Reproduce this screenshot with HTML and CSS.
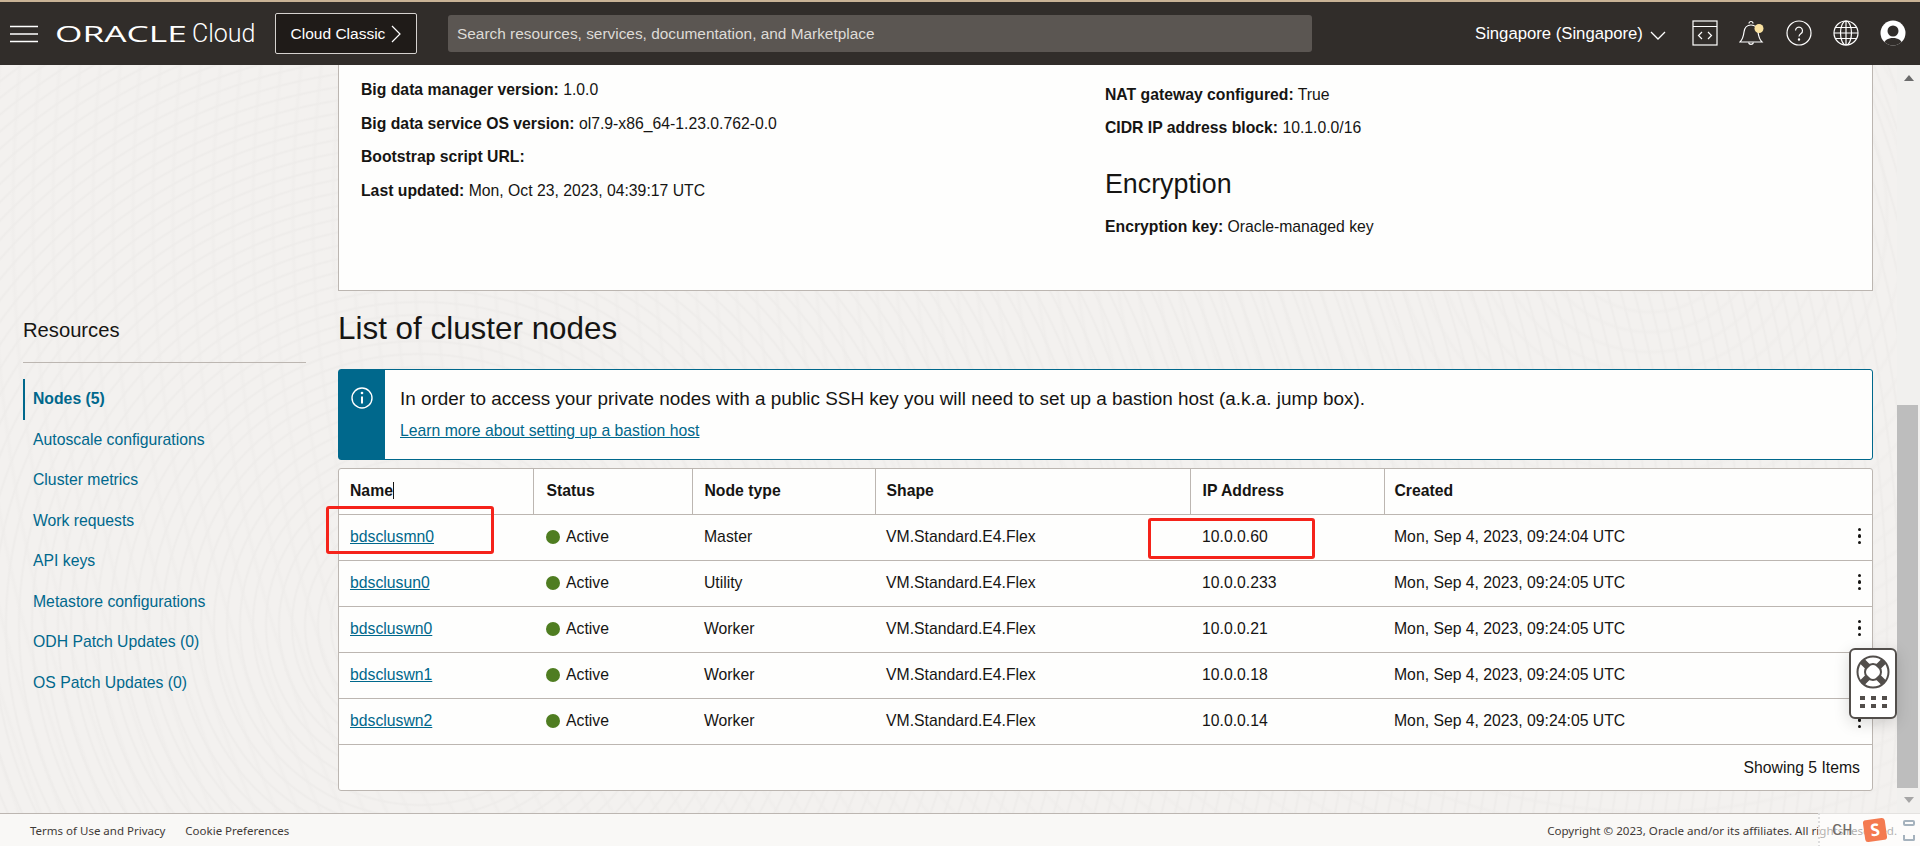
FILE: index.html
```html
<!DOCTYPE html>
<html lang="en">
<head>
    <meta charset="UTF-8">
    <meta name="viewport" content="width=device-width, initial-scale=1.0">
    <title>Big Data Service - Cluster details</title>
    <link rel="stylesheet" href="styles.css">
</head>
<body>
    <header class="topbar">
        <svg class="menu-icon" width="28" height="18" viewBox="0 0 28 18"><path d="M0 1.5h28M0 9h28M0 16.5h28" stroke="#fff" stroke-width="1.6"/></svg>
        <span class="logo-box"><span class="logo">ORACLE</span></span>
        <span class="logo-cloud">Cloud</span>
        <button class="classic-btn">Cloud Classic
            <svg width="10" height="18" viewBox="0 0 10 18"><path d="M1 1l8 8-8 8" fill="none" stroke="#fff" stroke-width="1.2"/></svg>
        </button>
        <div class="search">Search resources, services, documentation, and Marketplace</div>
        <div class="region">Singapore (Singapore)
            <svg width="16" height="9" viewBox="0 0 16 9"><path d="M1 1l7 7 7-7" fill="none" stroke="#fff" stroke-width="1.3"/></svg>
        </div>
        <div class="top-icons">
            <svg width="26" height="26" viewBox="0 0 26 26" fill="none" stroke="#fff" stroke-width="1.2"><rect x="1" y="1" width="24" height="24"/><path d="M1 6.500h24M10 12l-3.500 3.500 3.500 3.500M16 12l3.500 3.500-3.500 3.500"/></svg>
            <svg width="26" height="27" viewBox="0 0 26 27" fill="none" stroke="#fff" stroke-width="1.2"><path d="M1 22c3-3 3.500-6 4-10s3-7 7-7 6.500 3 7 7 1 7 4 10z"/><path d="M10 3.500a2 2 0 0 1 4 0M9.500 22.500a2.600 2.600 0 0 0 5 0"/><circle cx="20" cy="8.500" r="4.500" fill="#f9e1a0" stroke="none"/></svg>
            <svg width="26" height="26" viewBox="0 0 26 26" fill="none" stroke="#fff" stroke-width="1.2"><circle cx="13" cy="13" r="12"/><path d="M9.500 10.500a3.500 3.500 0 1 1 5.500 3c-1.300.9-2 1.500-2 3"/><circle cx="13" cy="19.500" r=".6" fill="#fff"/></svg>
            <svg width="26" height="26" viewBox="0 0 26 26" fill="none" stroke="#fff" stroke-width="1.2"><circle cx="13" cy="13" r="12"/><ellipse cx="13" cy="13" rx="5.500" ry="12"/><path d="M13 1v24M1 13h24M2.500 7.500h21M2.500 18.500h21"/></svg>
            <svg width="26" height="26" viewBox="0 0 26 26"><defs><clipPath id="avatar-clip"><circle cx="13" cy="13" r="12.500"/></clipPath></defs><circle cx="13" cy="13" r="12.500" fill="#fff"/><g clip-path="url(#avatar-clip)"><circle cx="13" cy="11" r="5.500" fill="#312d2a"/><path d="M3 26c1-6 5-8 10-8s9 2 10 8z" fill="#312d2a"/></g></svg>
        </div>
    </header>

    <div class="middle">
        <aside class="sidebar">
            <h2 class="side-title">Resources</h2>
            <nav class="side-nav">
                <a class="active">Nodes (5)</a>
                <a>Autoscale configurations</a>
                <a>Cluster metrics</a>
                <a>Work requests</a>
                <a>API keys</a>
                <a>Metastore configurations</a>
                <a>ODH Patch Updates (0)</a>
                <a>OS Patch Updates (0)</a>
            </nav>
        </aside>

        <main class="content">
            <section class="details">
                <div class="details-col">
                    <p><b>Big data manager version:</b> 1.0.0</p>
                    <p><b>Big data service OS version:</b> ol7.9-x86_64-1.23.0.762-0.0</p>
                    <p><b>Bootstrap script URL:</b></p>
                    <p><b>Last updated:</b> Mon, Oct 23, 2023, 04:39:17 UTC</p>
                </div>
                <div class="details-col right">
                    <p><b>NAT gateway configured:</b> True</p>
                    <p><b>CIDR IP address block:</b> 10.1.0.0/16</p>
                    <h3>Encryption</h3>
                    <p><b>Encryption key:</b> Oracle-managed key</p>
                </div>
            </section>

            <h1 class="list-title">List of cluster nodes</h1>

            <div class="info-box">
                <div class="info-side">
                    <svg width="22" height="22" viewBox="0 0 22 22" fill="none" stroke="#fff" stroke-width="1.4"><circle cx="11" cy="11" r="10"/><path d="M11 9.500v7" stroke-width="2"/><circle cx="11" cy="6" r="1.300" fill="#fff" stroke="none"/></svg>
                </div>
                <div class="info-text">
                    <p>In order to access your private nodes with a public SSH key you will need to set up a bastion host (a.k.a. jump box).</p>
                    <a>Learn more about setting up a bastion host</a>
                </div>
            </div>

            <div class="table-card">
                <table class="nodes">
                    <colgroup>
                        <col class="c-name"><col class="c-status"><col class="c-type"><col class="c-shape"><col class="c-ip"><col>
                    </colgroup>
                    <thead>
                        <tr><th>Name<span class="caret"></span></th><th>Status</th><th>Node type</th><th>Shape</th><th>IP Address</th><th>Created</th></tr>
                    </thead>
                    <tbody>
                        <tr><td><a>bdsclusmn0</a></td><td><i class="dot"></i>Active</td><td>Master</td><td>VM.Standard.E4.Flex</td><td>10.0.0.60</td><td>Mon, Sep 4, 2023, 09:24:04 UTC<span class="kebab"><i></i><i></i><i></i></span></td></tr>
                        <tr><td><a>bdsclusun0</a></td><td><i class="dot"></i>Active</td><td>Utility</td><td>VM.Standard.E4.Flex</td><td>10.0.0.233</td><td>Mon, Sep 4, 2023, 09:24:05 UTC<span class="kebab"><i></i><i></i><i></i></span></td></tr>
                        <tr><td><a>bdscluswn0</a></td><td><i class="dot"></i>Active</td><td>Worker</td><td>VM.Standard.E4.Flex</td><td>10.0.0.21</td><td>Mon, Sep 4, 2023, 09:24:05 UTC<span class="kebab"><i></i><i></i><i></i></span></td></tr>
                        <tr><td><a>bdscluswn1</a></td><td><i class="dot"></i>Active</td><td>Worker</td><td>VM.Standard.E4.Flex</td><td>10.0.0.18</td><td>Mon, Sep 4, 2023, 09:24:05 UTC<span class="kebab"><i></i><i></i><i></i></span></td></tr>
                        <tr><td><a>bdscluswn2</a></td><td><i class="dot"></i>Active</td><td>Worker</td><td>VM.Standard.E4.Flex</td><td>10.0.0.14</td><td>Mon, Sep 4, 2023, 09:24:05 UTC<span class="kebab"><i></i><i></i><i></i></span></td></tr>
                    </tbody>
                </table>
                <div class="table-foot">Showing 5 Items</div>
            </div>
        </main>

        <div class="scrollbar">
            <span class="arrow up"></span>
            <span class="thumb"></span>
            <span class="arrow down"></span>
        </div>

        <!-- red boxes drawn over the screenshot -->
        <span class="mark mark-name"></span>
        <span class="mark mark-ip"></span>

        <div class="help-widget">
            <svg width="34" height="34" viewBox="0 0 34 34" fill="none"><circle cx="17" cy="17" r="15.500" stroke="#524e4b" stroke-width="2"/><circle cx="17" cy="17" r="8" stroke="#524e4b" stroke-width="2"/><path d="M6 6l6.500 6.500M28 6l-6.500 6.500M6 28l6.500-6.500M28 28l-6.500-6.500" stroke="#524e4b" stroke-width="6.500"/></svg>
            <div class="help-dots"><i></i><i></i><i></i><i></i><i></i><i></i></div>
        </div>
    </div>

    <footer class="footer">
        <a>Terms of Use and Privacy</a>
        <a>Cookie Preferences</a>
        <span class="copyright">Copyright © 2023, Oracle and/or its affiliates. All rights reserved.</span>
        <div class="ime">
            <span class="ime-ch">CH</span>
            <span class="ime-s">S</span>
            <span class="ime-more"><i></i><i></i></span>
        </div>
    </footer>
</body>
</html>
```

FILE: styles.css
```css
* {
    margin: 0;
    padding: 0;
    box-sizing: border-box;
}
body {
    font-family: "Liberation Sans", Arial, sans-serif;
    font-size: 15.750px;
    color: #161513;
    width: 100vw;
    height: 100vh;
    overflow: hidden;
    display: flex;
    flex-direction: column;
    background: #f3f1ef;
}
a {
    color: #00688c;
}

/* top bar */
.topbar {
    height: 65px;
    flex: none;
    display: flex;
    align-items: center;
    background: #312d2a;
    border-top: 2px solid #c9b396;
    color: #fff;
    padding-left: 10px;
}
.menu-icon {
    flex: none;
    margin-right: 17px;
}
.logo-box {
    width: 130px;
    flex: none;
}
.logo {
    display: inline-block;
    font-family: "Open Sans", sans-serif;
    font-size: 21px;
    transform: scaleX(1.680);
    transform-origin: left center;
}
.logo-cloud {
    font-family: Roboto, sans-serif;
    font-weight: 300;
    font-size: 25px;
    margin-left: 7px;
    width: 63px;
}
.classic-btn {
    width: 142px;
    height: 41px;
    margin-left: 20px;
    background: #1f1b18;
    color: #fff;
    border: 1px solid #d5d2cf;
    border-radius: 2px;
    font-family: inherit;
    font-size: 15.500px;
    display: flex;
    align-items: center;
    justify-content: center;
    gap: 6px;
}
.search {
    width: 864px;
    height: 37px;
    margin-left: 31px;
    padding-left: 9px;
    line-height: 37px;
    background: #5b5652;
    border-radius: 3px;
    color: #dedbd7;
    font-size: 15.400px;
}
.region {
    margin-left: 163px;
    width: 191px;
    font-size: 16.700px;
    display: flex;
    align-items: center;
    gap: 7px;
}
.region svg {
    margin-top: 4px;
}
.top-icons {
    margin-left: 26px;
    display: flex;
    gap: 21px;
}

/* middle */
.middle {
    flex: 1;
    min-height: 0;
    position: relative;
    display: flex;
    padding-left: 23px;
    background-color: #f3f1ef;
    background-image:
        repeating-radial-gradient(circle at 420px 560px, transparent 0 9px, #eeecea 11px, transparent 13px),
        repeating-radial-gradient(circle at 1650px 150px, transparent 0 14px, #f0eeec 17px, transparent 20px);
}
.sidebar {
    width: 283px;
    flex: none;
    padding-top: 253px;
}
.side-title {
    font-size: 20.200px;
    font-weight: 400;
    line-height: 24px;
    padding-bottom: 20px;
    border-bottom: 1px solid #bcb6b1;
}
.side-nav {
    display: flex;
    flex-direction: column;
    margin-top: 16px;
}
.side-nav a {
    height: 40.500px;
    line-height: 40.500px;
    padding-left: 10px;
}
.side-nav .active {
    font-weight: 700;
    border-left: 2px solid #00688c;
    padding-left: 8px;
}
.content {
    width: 1535px;
    margin-left: 32px;
    flex: none;
}
.details {
    height: 226px;
    background: #fefefd;
    border: 1px solid #bcb6b1;
    border-top: 0;
    display: flex;
    padding-left: 22px;
}
.details-col {
    width: 744px;
    padding-top: 8px;
}
.details-col p {
    line-height: 33.500px;
}
.details-col.right {
    padding-top: 13px;
}
.details-col.right p {
    line-height: 33px;
}
.details-col h3 {
    font-size: 26.800px;
    font-weight: 400;
    line-height: 34px;
    margin: 23px 0 9px;
}
.list-title {
    font-size: 31.400px;
    font-weight: 400;
    line-height: 36px;
    margin-top: 20px;
    margin-bottom: 22px;
}
.info-box {
    height: 91px;
    display: flex;
    background: #fefefd;
    border: 1px solid #00688c;
    border-radius: 3px;
}
.info-side {
    width: 46px;
    background: #00688c;
    display: flex;
    justify-content: center;
    padding-top: 17px;
}
.info-text {
    padding-left: 15px;
    padding-top: 17px;
}
.info-text p {
    font-size: 18.900px;
    line-height: 24px;
    margin-bottom: 11px;
}
.info-text a {
    text-decoration: underline;
}
.table-card {
    margin-top: 8px;
    height: 323px;
    background: #fefefd;
    border: 1px solid #bcb6b1;
    border-radius: 3px;
}
.nodes {
    width: 100%;
    table-layout: fixed;
    border-collapse: collapse;
}
.c-name { width: 194px; }
.c-status { width: 159px; }
.c-type { width: 183px; }
.c-shape { width: 315px; }
.c-ip { width: 194px; }
.nodes th, .nodes td {
    height: 46px;
    padding: 0 0 0 11px;
    text-align: left;
    border-bottom: 1px solid #bcb6b1;
    white-space: nowrap;
}
.nodes th {
    height: 45px;
    font-weight: 700;
    border-right: 1px solid #bcb6b1;
}
.nodes th:last-child {
    border-right: 0;
}
.nodes th:nth-child(2), .nodes td:nth-child(2) { padding-left: 13px; }
.nodes th:nth-child(3), .nodes td:nth-child(3) { padding-left: 12px; }
.nodes th:nth-child(5), .nodes td:nth-child(5) { padding-left: 12px; }
.nodes th:nth-child(6), .nodes td:nth-child(6) { padding-left: 10px; }
.nodes a {
    text-decoration: underline;
}
.caret {
    display: inline-block;
    width: 1px;
    height: 17px;
    background: #161513;
    vertical-align: -3px;
}
.dot {
    display: inline-block;
    width: 14px;
    height: 14px;
    border-radius: 50%;
    background: #4f7d21;
    margin-right: 6px;
    vertical-align: -2px;
}
.nodes td:last-child {
    position: relative;
}
.kebab {
    position: absolute;
    right: 11px;
    top: 13px;
    display: flex;
    flex-direction: column;
    gap: 3.200px;
}
.kebab i {
    width: 3.500px;
    height: 3.500px;
    border-radius: 50%;
    background: #161513;
}
.table-foot {
    text-align: right;
    padding: 14px 12px 0 0;
}

/* scrollbar */
.scrollbar {
    width: 23px;
    margin-left: 24px;
    flex: none;
    display: flex;
    flex-direction: column;
    align-items: center;
    background: #f1f0ee;
}
.arrow {
    width: 0;
    height: 0;
    border-left: 5px solid transparent;
    border-right: 5px solid transparent;
}
.arrow.up {
    border-bottom: 6px solid #6b6b6b;
    margin-top: 10px;
}
.arrow.down {
    border-top: 6px solid #a6a6a6;
    margin-top: 9px;
}
.thumb {
    width: 21px;
    height: 383px;
    margin-top: 324px;
    margin-right: 2px;
    background: #bdbdbd;
}

/* things lying over the page */
.mark {
    position: absolute;
    border: 3px solid #f5231a;
    border-radius: 3px;
}
.mark-name {
    left: 326px;
    top: 441px;
    width: 168px;
    height: 48px;
}
.mark-ip {
    left: 1148px;
    top: 453px;
    width: 167px;
    height: 41px;
}
.help-widget {
    position: absolute;
    left: 1849px;
    top: 583px;
    width: 48px;
    height: 71px;
    background: #fff;
    border: 2px solid #524e4b;
    border-radius: 6px;
    box-shadow: 0 4px 16px rgba(0, 0, 0, 0.15);
    display: flex;
    flex-direction: column;
    align-items: center;
    padding-top: 5px;
    gap: 7px;
}
.help-dots {
    display: grid;
    grid-template-columns: repeat(3, 5px);
    gap: 4px 6px;
}
.help-dots i {
    width: 5px;
    height: 4px;
    background: #524e4b;
}

/* footer */
.footer {
    height: 33px;
    flex: none;
    position: relative;
    display: flex;
    align-items: center;
    padding-left: 30px;
    gap: 20px;
    font-family: "Noto Sans", sans-serif;
    font-size: 11.500px;
    background: #f9f8f6;
    border-top: 1px solid #bcb6b1;
}
.footer a {
    color: #3f3a36;
}
.copyright {
    margin-left: auto;
    margin-right: 23px;
    font-size: 11.600px;
    color: #3f3a36;
}
.ime {
    position: absolute;
    right: 0;
    top: -1px;
    width: 102px;
    height: 34px;
    display: flex;
    align-items: center;
    background: rgba(255, 255, 255, 0.6);
    border-left: 2px dotted #ddd;
    padding-left: 12px;
}
.ime-ch {
    font-family: "Liberation Mono", monospace;
    font-size: 17px;
    color: #6f6b67;
    width: 32px;
}
.ime-s {
    width: 22px;
    height: 22px;
    background: #f47a50;
    color: #fff;
    font-weight: 700;
    font-size: 17px;
    line-height: 22px;
    text-align: center;
    border-radius: 3px;
    transform: rotate(-8deg);
}
.ime-more {
    display: flex;
    flex-direction: column;
    gap: 9px;
    margin-left: 17px;
}
.ime-more i {
    width: 12px;
    height: 6px;
    border: 2px solid #a5b2bd;
    border-radius: 2px;
}
.ime-more i:last-child {
    border-top: 0;
    border-radius: 0 0 2px 2px;
}
```
